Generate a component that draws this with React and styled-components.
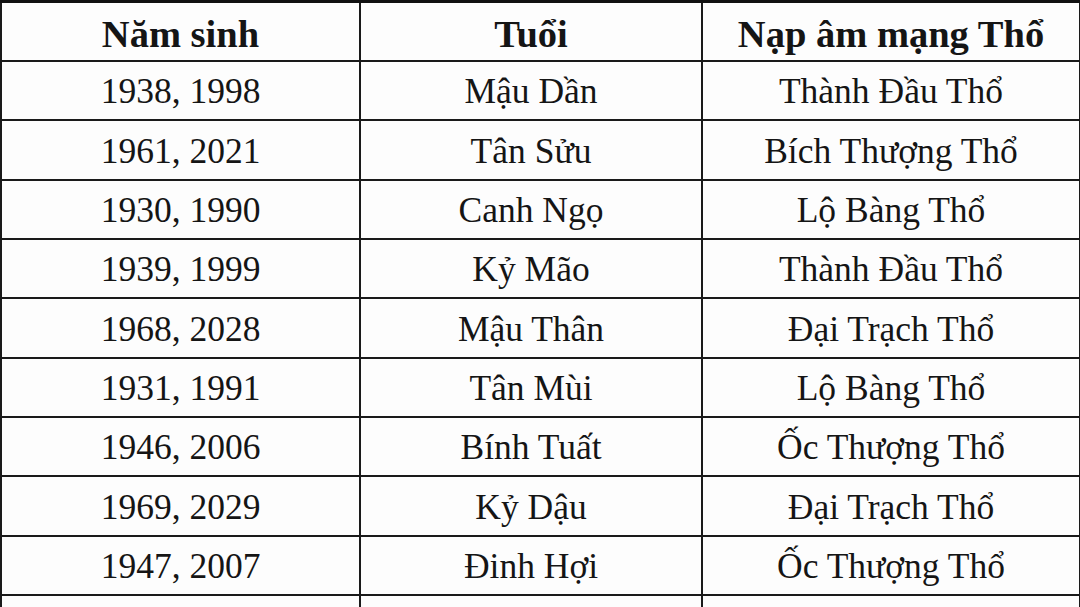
import React from 'react';
import styled, { createGlobalStyle } from 'styled-components';

const GlobalStyle = createGlobalStyle`
  html, body {
    margin: 0;
    padding: 0;
    background: #fff;
    overflow: hidden;
  }
`;

const Page = styled.div`
  width: 1080px;
  height: 607px;
  overflow: hidden;
  background: #fdfdfd;
`;

const Table = styled.table`
  width: 1079px;
  table-layout: fixed;
  border-collapse: collapse;
  border-top: 3px solid #111;
  font-family: "Liberation Serif", "Times New Roman", serif;
  color: #151515;
`;

const Row = styled.tr`
  height: 59.35px;
`;

const Cell = styled.td`
  border: 2px solid #1a1a1a;
  padding: ${(p) => (p.$head ? '5px 0 0' : '3px 0 0')};
  text-align: center;
  vertical-align: middle;
  font-size: ${(p) => (p.$head ? '38.5px' : '35.5px')};
  line-height: 1;
  font-weight: ${(p) => (p.$head ? 700 : 400)};
  white-space: nowrap;
`;

const rows = [
  ['1938, 1998', 'Mậu Dần', 'Thành Đầu Thổ'],
  ['1961, 2021', 'Tân Sửu', 'Bích Thượng Thổ'],
  ['1930, 1990', 'Canh Ngọ', 'Lộ Bàng Thổ'],
  ['1939, 1999', 'Kỷ Mão', 'Thành Đầu Thổ'],
  ['1968, 2028', 'Mậu Thân', 'Đại Trạch Thổ'],
  ['1931, 1991', 'Tân Mùi', 'Lộ Bàng Thổ'],
  ['1946, 2006', 'Bính Tuất', 'Ốc Thượng Thổ'],
  ['1969, 2029', 'Kỷ Dậu', 'Đại Trạch Thổ'],
  ['1947, 2007', 'Đinh Hợi', 'Ốc Thượng Thổ'],
  ['', '', ''],
];

const App = () => (
  <Page>
    <GlobalStyle />
    <Table>
      <colgroup>
        <col style={{ width: 359 }} />
        <col style={{ width: 342 }} />
        <col style={{ width: 378 }} />
      </colgroup>
      <thead>
        <Row>
          <Cell as="th" $head>Năm sinh</Cell>
          <Cell as="th" $head>Tuổi</Cell>
          <Cell as="th" $head>Nạp âm mạng Thổ</Cell>
        </Row>
      </thead>
      <tbody>
        {rows.map((r, i) => (
          <Row key={i}>
            {r.map((c, j) => (
              <Cell key={j}>{c}</Cell>
            ))}
          </Row>
        ))}
      </tbody>
    </Table>
  </Page>
);

export default App;
